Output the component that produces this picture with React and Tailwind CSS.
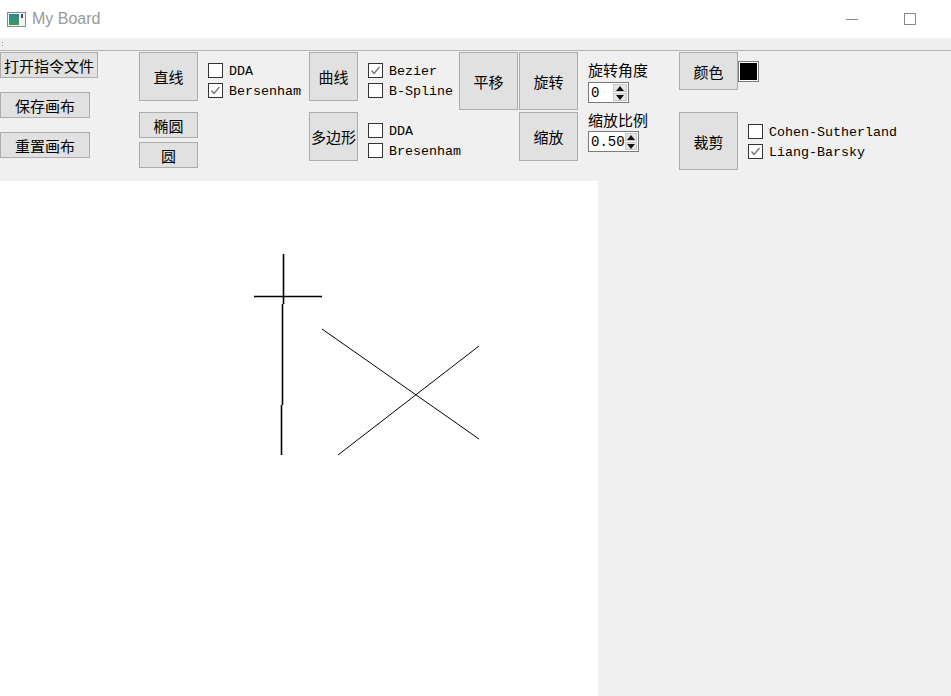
import React from "react";

const cjk = "font-['Noto_Sans_CJK_SC','Noto_Sans',sans-serif]";
const mono = "font-['Liberation_Mono','DejaVu_Sans_Mono',monospace]";

function Btn({ cls, children }) {
  return (
    <div
      className={`${cls} shrink-0 bg-[#e1e1e1] border border-[#adadad] flex items-center justify-center text-[15px] leading-none text-black ${cjk}`}
    >
      {children}
    </div>
  );
}

function Check({ checked, label }) {
  return (
    <div className="h-[20px] flex items-center">
      <div className="w-[15px] h-[15px] shrink-0 border border-[#333333] bg-white flex items-center justify-center">
        {checked && (
          <svg width="13" height="13" viewBox="0 0 13 13">
            <polyline points="2.5,6.5 5,9.5 10.5,3" fill="none" stroke="#6e6e6e" strokeWidth="1.2" />
          </svg>
        )}
      </div>
      <span className={`ml-[6px] pt-[3px] text-[13.33px] leading-none text-black whitespace-nowrap ${mono}`}>{label}</span>
    </div>
  );
}

function Spin({ w, value }) {
  return (
    <div className={`${w} h-[21px] border border-[#7a7a7a] bg-white flex items-center`}>
      <span className={`ml-[2px] pt-[1px] flex-1 text-[14px] leading-none text-black ${mono}`}>{value}</span>
      <div className="w-[14px] h-[17px] mr-[1px] flex flex-col gap-[1px]">
        <div className="flex-1 bg-[#e6e6e6] border border-[#c8c8c8] flex items-center justify-center">
          <svg width="8" height="5" viewBox="0 0 8 5"><polygon points="0,5 8,5 4,0" fill="#111" /></svg>
        </div>
        <div className="flex-1 bg-[#e6e6e6] border border-[#c8c8c8] flex items-center justify-center">
          <svg width="8" height="5" viewBox="0 0 8 5"><polygon points="0,0 8,0 4,5" fill="#111" /></svg>
        </div>
      </div>
    </div>
  );
}

export default function App() {
  return (
    <div className="w-[951px] h-[696px] flex flex-col overflow-hidden bg-white">
      {/* title bar */}
      <div className="h-[38px] shrink-0 bg-white flex items-center">
        <svg className="ml-[7px]" width="19" height="15" viewBox="0 0 19 15">
          <defs>
            <linearGradient id="g" x1="0" y1="0" x2="0" y2="1">
              <stop offset="0" stopColor="#2a8a9a" />
              <stop offset="1" stopColor="#3d9a55" />
            </linearGradient>
          </defs>
          <rect x="0.5" y="0.5" width="18" height="14" fill="#f4f4f4" stroke="#8a8a8a" />
          <rect x="2" y="2" width="10" height="11" fill="url(#g)" />
          <rect x="14" y="2" width="2" height="4" fill="#4a4a4a" />
        </svg>
        <span className="ml-[6px] text-[16px] text-[#9a9a9a] font-['Liberation_Sans',sans-serif]">My Board</span>
        <div className="ml-auto flex items-center">
          <div className="w-[12px] h-[1px] bg-[#8a8a8a]" />
          <div className="ml-[46px] mr-[35px] w-[12px] h-[12px] border border-[#8a8a8a]" />
        </div>
      </div>
      {/* menu strip */}
      <div className="h-[13px] shrink-0 bg-[#efefef] border-b border-[#b4b4b4] flex items-center">
        <div className="ml-[2px] flex flex-col gap-[2px]">
          <div className="w-[1px] h-[1px] bg-[#9a9a9a]" />
          <div className="w-[1px] h-[1px] bg-[#9a9a9a]" />
        </div>
      </div>
      {/* toolbar */}
      <div className="h-[130px] shrink-0 bg-[#f0f0f0] flex items-start pt-[1px]">
        <div className="w-[98px] flex flex-col">
          <Btn cls="w-[98px] h-[26px]">打开指令文件</Btn>
          <div className="mt-[14px]"><Btn cls="w-[90px] h-[26px]">保存画布</Btn></div>
          <div className="mt-[14px]"><Btn cls="w-[90px] h-[26px]">重置画布</Btn></div>
        </div>
        <div className="ml-[41px] w-[59px] flex flex-col">
          <Btn cls="w-[59px] h-[49px]">直线</Btn>
          <div className="mt-[11px]"><Btn cls="w-[59px] h-[26px]">椭圆</Btn></div>
          <div className="mt-[4px]"><Btn cls="w-[59px] h-[26px]">圆</Btn></div>
        </div>
        <div className="ml-[10px] w-[101px] pt-[8px] flex flex-col relative">
          <Check label="DDA" />
          <Check checked label="Bersenham" />
          <div className="absolute left-[92px] top-[37px] w-[1px] h-[2px] bg-[#555]" />
        </div>
        <div className="w-[49px] flex flex-col">
          <Btn cls="w-[49px] h-[49px]">曲线</Btn>
          <div className="mt-[11px]"><Btn cls="w-[49px] h-[49px]">多边形</Btn></div>
        </div>
        <div className="ml-[10px] w-[91px] pt-[8px] flex flex-col">
          <Check checked label="Bezier" />
          <Check label="B-Spline" />
          <div className="mt-[20px]"><Check label="DDA" /></div>
          <Check label="Bresenham" />
        </div>
        <Btn cls="w-[59px] h-[58px]">平移</Btn>
        <div className="ml-[1px] w-[59px] flex flex-col">
          <Btn cls="w-[59px] h-[58px]">旋转</Btn>
          <div className="mt-[2px]"><Btn cls="w-[59px] h-[49px]">缩放</Btn></div>
        </div>
        <div className="ml-[10px] w-[91px] flex flex-col">
          <div className={`mt-[7px] h-[20px] flex items-center text-[15px] leading-none text-black ${cjk}`}>旋转角度</div>
          <div className="mt-[3px]"><Spin w="w-[41px]" value="0" /></div>
          <div className={`mt-[6px] h-[20px] flex items-center text-[15px] leading-none text-black ${cjk}`}>缩放比例</div>
          <div className="mt-[2px]"><Spin w="w-[51px]" value="0.50" /></div>
        </div>
        <div className="flex flex-col">
          <div className="flex items-start">
            <Btn cls="w-[59px] h-[38px]">颜色</Btn>
            <div className="mt-[9px] w-[21px] h-[21px] border border-[#7a7a7a] bg-white p-[1px]">
              <div className="w-full h-full bg-black" />
            </div>
          </div>
          <div className="mt-[22px] flex items-start">
            <Btn cls="w-[59px] h-[58px]">裁剪</Btn>
            <div className="ml-[10px] mt-[9px] flex flex-col">
              <Check label="Cohen-Sutherland" />
              <Check checked label="Liang-Barsky" />
            </div>
          </div>
        </div>
      </div>
      {/* main */}
      <div className="flex-1 flex bg-[#f0f0f0]">
        <div className="w-[598px] h-full bg-white">
          <svg width="598" height="515" viewBox="0 0 598 515">
            <g stroke="#000" fill="none">
              <line x1="283.5" y1="73" x2="283.5" y2="123" strokeWidth="1.6" />
              <line x1="282.5" y1="123" x2="282.5" y2="224" strokeWidth="1.6" />
              <line x1="281.5" y1="224" x2="281.5" y2="274" strokeWidth="1.6" />
              <line x1="254" y1="115.5" x2="322" y2="115.5" strokeWidth="1.3" />
              <line x1="322" y1="148" x2="479" y2="258" strokeWidth="1" />
              <line x1="338" y1="274" x2="479" y2="165" strokeWidth="1" />
            </g>
          </svg>
        </div>
      </div>
    </div>
  );
}
